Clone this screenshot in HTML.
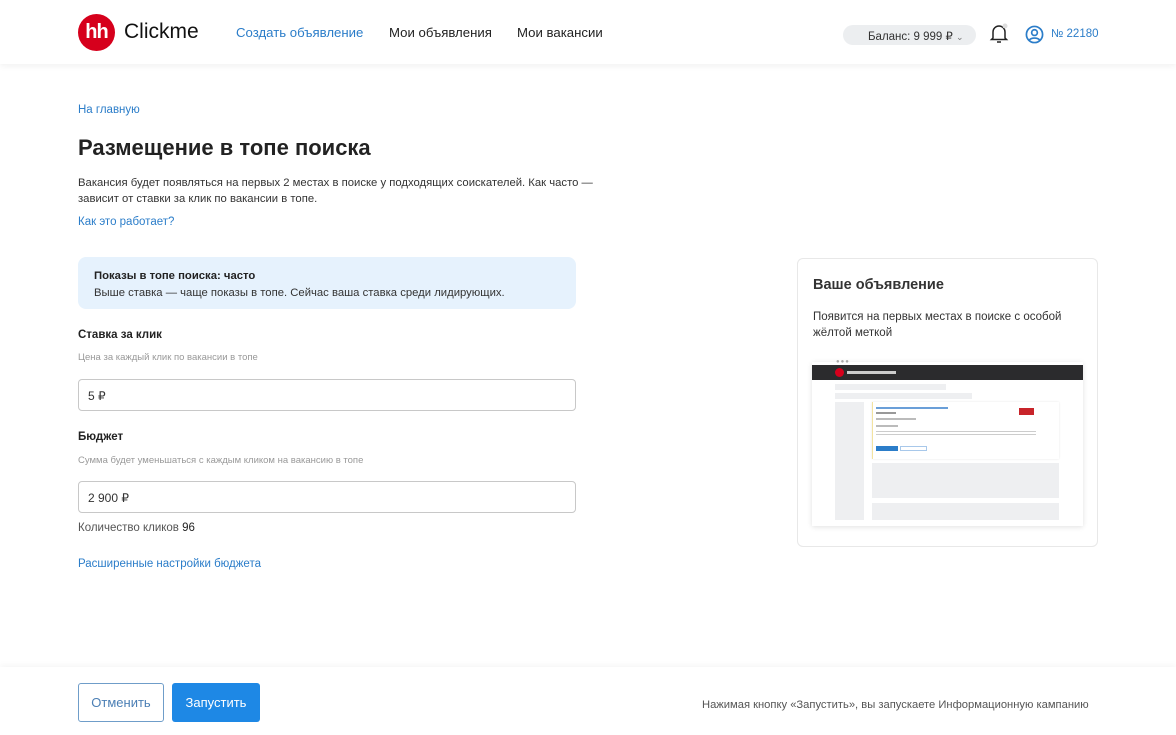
<!DOCTYPE html>
<html><head><meta charset="utf-8"><style>
*{box-sizing:border-box;margin:0;padding:0}
body{width:1176px;height:735px;overflow:hidden;background:#fff;font-family:"Liberation Sans",Arial,sans-serif;color:#222;position:relative}
.a{position:absolute;white-space:nowrap}
.hdr{left:0;top:0;width:1176px;height:64px;background:#fff;box-shadow:0 2px 6px rgba(0,0,0,.06)}
.blue{color:#2b7dc9}
.ft{left:0;top:667px;width:1176px;height:68px;background:#fff;box-shadow:0 -2px 6px rgba(0,0,0,.04)}
.inp{left:78px;width:498px;height:32px;border:1px solid #c8c8c8;border-radius:4px;font-size:12px;padding:9px 0 0 9px;color:#333}
.g{background:#eeeff1}
</style></head><body>
<div class="a hdr"></div>
<div class="a" style="left:78px;top:14px;width:37px;height:37px;border-radius:50%;background:#d6001c;color:#fff;font-weight:bold;font-size:20px;text-align:center;line-height:36px;letter-spacing:-1px">hh</div>
<div class="a" style="left:124px;top:20px;font-size:21px;color:#111">Clickme</div>
<div class="a blue" style="left:236px;top:25px;font-size:13.2px">Создать объявление</div>
<div class="a" style="left:389px;top:25px;font-size:13.2px">Мои объявления</div>
<div class="a" style="left:517px;top:25px;font-size:13.2px">Мои вакансии</div>
<div class="a" style="left:843px;top:25px;width:133px;height:20px;border-radius:10px;background:#eceef0;font-size:11.5px;color:#333;padding:4px 0 0 25px">Баланс: 9 999 ₽ <span style="font-size:9px;color:#777">⌄</span></div>
<svg class="a" style="left:989px;top:23px" width="20" height="22" viewBox="0 0 20 22"><path d="M4 15V9a6 6 0 0 1 12 0v6l1.5 1.5h-15z M8 19h4" fill="none" stroke="#222" stroke-width="1.5"/><circle cx="16" cy="3" r="2.5" fill="#ddd"/></svg>
<svg class="a" style="left:1025px;top:25px" width="19" height="19" viewBox="0 0 20 20"><circle cx="10" cy="10" r="8.5" fill="none" stroke="#2b7dc9" stroke-width="1.8"/><circle cx="10" cy="8" r="3" fill="none" stroke="#2b7dc9" stroke-width="1.8"/><path d="M4.5 16c2-3 9-3 11 0" fill="none" stroke="#2b7dc9" stroke-width="1.8"/></svg>
<div class="a blue" style="left:1051px;top:28px;font-size:11.5px">№ 22180</div>

<div class="a blue" style="left:78px;top:104px;font-size:11.5px">На главную</div>
<div class="a" style="left:78px;top:135px;font-size:22px;font-weight:bold;color:#222">Размещение в топе поиска</div>
<div class="a" style="left:78px;top:176px;font-size:11.3px;line-height:15.5px;color:#333">Вакансия будет появляться на первых 2 местах в поиске у подходящих соискателей. Как часто —<br>зависит от ставки за клик по вакансии в топе.</div>
<div class="a blue" style="left:78px;top:216px;font-size:11.5px">Как это работает?</div>
<div class="a" style="left:78px;top:257px;width:498px;height:52px;background:#e6f2fd;border-radius:8px;padding:11px 0 0 16px;font-size:11.3px;line-height:17px;color:#333"><b style="color:#222">Показы в топе поиска: часто</b><br>Выше ставка — чаще показы в топе. Сейчас ваша ставка среди лидирующих.</div>
<div class="a" style="left:78px;top:329px;font-size:11.5px;font-weight:bold">Ставка за клик</div>
<div class="a" style="left:78px;top:352px;font-size:9.5px;color:#999">Цена за каждый клик по вакансии в топе</div>
<div class="a inp" style="top:379px">5 ₽</div>
<div class="a" style="left:78px;top:431px;font-size:11.5px;font-weight:bold">Бюджет</div>
<div class="a" style="left:78px;top:455px;font-size:9.5px;color:#999">Сумма будет уменьшаться с каждым кликом на вакансию в топе</div>
<div class="a inp" style="top:481px">2 900 ₽</div>
<div class="a" style="left:78px;top:522px;font-size:11.5px;color:#555">Количество кликов <span style="color:#222">96</span></div>
<div class="a blue" style="left:78px;top:558px;font-size:11.5px">Расширенные настройки бюджета</div>

<div class="a" style="left:797px;top:258px;width:301px;height:289px;border:1px solid #e8e8e8;border-radius:6px"></div>
<div class="a" style="left:813px;top:277px;font-size:14.5px;font-weight:bold;color:#333">Ваше объявление</div>
<div class="a" style="left:813px;top:309px;font-size:11.5px;line-height:16px;color:#333">Появится на первых местах в поиске с особой<br>жёлтой меткой</div>
<div class="a" style="left:812px;top:362px;width:271px;height:164px;background:#fff;box-shadow:0 1px 5px rgba(0,0,0,.12)"></div>
<div class="a" style="left:836px;top:359px;font-size:6px;color:#aaa;letter-spacing:1px">●●●</div>
<div class="a" style="left:812px;top:365px;width:271px;height:15px;background:#2b2b2d"></div>
<div class="a" style="left:835px;top:368px;width:9px;height:9px;border-radius:50%;background:#d6001c"></div>
<div class="a" style="left:847px;top:371px;width:49px;height:3px;background:#ccc"></div>
<div class="a g" style="left:835px;top:384px;width:111px;height:6px"></div>
<div class="a g" style="left:835px;top:393px;width:137px;height:6px"></div>
<div class="a g" style="left:835px;top:402px;width:29px;height:118px"></div>
<div class="a" style="left:872px;top:402px;width:187px;height:57px;background:#fff;border-left:1px solid #f3e3a0;box-shadow:0 0 2px rgba(0,0,0,.1)"></div>
<div class="a" style="left:876px;top:407px;width:72px;height:2px;background:#6a9fd8"></div>
<div class="a" style="left:876px;top:412px;width:20px;height:2px;background:#999"></div>
<div class="a" style="left:876px;top:418px;width:40px;height:2px;background:#bbb"></div>
<div class="a" style="left:876px;top:425px;width:22px;height:2px;background:#bbb"></div>
<div class="a" style="left:876px;top:431px;width:160px;height:6px;background:repeating-linear-gradient(#ccc 0 1px,transparent 1px 3px)"></div>
<div class="a" style="left:1019px;top:408px;width:15px;height:7px;background:#c8242a"></div>
<div class="a" style="left:876px;top:446px;width:22px;height:5px;background:#2b7dc9"></div>
<div class="a" style="left:900px;top:446px;width:27px;height:5px;border:1px solid #a8c8ea"></div>
<div class="a g" style="left:872px;top:463px;width:187px;height:35px"></div>
<div class="a g" style="left:872px;top:503px;width:187px;height:17px"></div>

<div class="a ft"></div>
<div class="a" style="left:78px;top:683px;width:86px;height:39px;border:1px solid #6f9dc9;border-radius:3px;color:#4b7fb5;font-size:13px;text-align:center;line-height:37px">Отменить</div>
<div class="a" style="left:172px;top:683px;width:88px;height:39px;background:#1e88e5;border-radius:3px;color:#fff;font-size:13px;text-align:center;line-height:39px">Запустить</div>
<div class="a" style="left:702px;top:699px;font-size:11.2px;color:#555">Нажимая кнопку «Запустить», вы запускаете Информационную кампанию</div>
</body></html>
